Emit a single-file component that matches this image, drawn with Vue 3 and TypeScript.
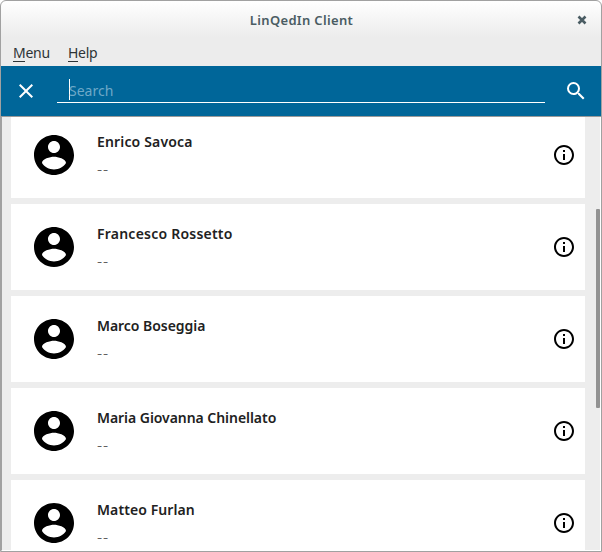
<script setup lang="ts">
import { ref } from 'vue'

interface Contact {
  name: string
  detail: string
  tracking: number
}

const query = ref('')
const contacts: Contact[] = [
  { name: 'Enrico Savoca', detail: '--', tracking: 0.16 },
  { name: 'Francesco Rossetto', detail: '--', tracking: 0.23 },
  { name: 'Marco Boseggia', detail: '--', tracking: -0.04 },
  { name: 'Maria Giovanna Chinellato', detail: '--', tracking: -0.05 },
  { name: 'Matteo Furlan', detail: '--', tracking: 0.09 },
]
</script>

<template>
  <div class="window">
    <header class="titlebar">
      <span class="side"></span>
      <h1 class="title">LinQedIn Client</h1>
      <button class="side close" aria-label="Close">
        <svg width="10" height="10" viewBox="0 0 10 10"><path d="M1.500 1.500 8.500 8.500M8.500 1.500 1.500 8.500" stroke="#4a5c63" stroke-width="2.600" /></svg>
      </button>
    </header>
    <nav class="menubar">
      <span class="menu"><span class="key">M</span>enu</span>
      <span class="menu"><span class="key">H</span>elp</span>
    </nav>
    <div class="search">
      <svg class="clear" width="24" height="24" viewBox="0 0 24 24"><path fill="#fff" d="M19 6.41 17.59 5 12 10.59 6.41 5 5 6.41 10.59 12 5 17.59 6.41 19 12 13.41 17.59 19 19 17.59 13.41 12z" /></svg>
      <div class="field">
        <i class="caret"></i>
        <span v-if="!query" class="hint">Search</span>
      </div>
      <svg class="find" width="24" height="24" viewBox="0 0 24 24"><path fill="#fff" d="M15.5 14h-.79l-.28-.27A6.47 6.47 0 0 0 16 9.5 6.5 6.5 0 1 0 9.5 16c1.61 0 3.09-.59 4.23-1.57l.27.28v.79l5 4.99L20.49 19l-4.99-5zm-6 0C7.01 14 5 11.99 5 9.5S7.01 5 9.5 5 14 7.01 14 9.5 11.99 14 9.5 14z" /></svg>
    </div>
    <main class="body">
      <ul class="list">
        <li v-for="c in contacts" :key="c.name" class="card">
          <svg class="avatar" width="48" height="48" viewBox="0 0 24 24"><path d="M12 2C6.480 2 2 6.480 2 12s4.480 10 10 10 10-4.480 10-10S17.520 2 12 2zm0 3c1.660 0 3 1.340 3 3s-1.340 3-3 3-3-1.340-3-3 1.340-3 3-3zm0 14.200c-2.500 0-4.710-1.280-6-3.220.03-1.990 4-3.080 6-3.080 1.990 0 5.970 1.090 6 3.080-1.290 1.940-3.500 3.220-6 3.220z" /></svg>
          <div class="text">
            <span class="name" :style="{ letterSpacing: c.tracking + 'px' }">{{ c.name }}</span>
            <span class="detail">{{ c.detail }}</span>
          </div>
          <svg class="info" width="24" height="24" viewBox="0 0 24 24"><path d="M11 17h2v-6h-2v6zm1-15C6.480 2 2 6.480 2 12s4.480 10 10 10 10-4.480 10-10S17.520 2 12 2zm0 18c-4.410 0-8-3.590-8-8s3.590-8 8-8 8 3.590 8 8-3.590 8-8 8zM11 9h2V7h-2v2z" /></svg>
        </li>
      </ul>
      <div class="track"><div class="thumb"></div></div>
    </main>
  </div>
</template>

<style>
body {
  background: #fff;
}
</style>

<style scoped>
.window {
  box-sizing: border-box;
  width: 602px;
  height: 552px;
  border: 1px solid #a1a1a1;
  border-radius: 6px 6px 0 0;
  overflow: hidden;
  display: flex;
  flex-direction: column;
  font-family: "Noto Sans", "Open Sans", sans-serif;
  background: linear-gradient(#fff, #ececec 36px);
}
.titlebar {
  height: 38px;
  display: flex;
  align-items: center;
}
.side {
  width: 40px;
}
.close {
  height: 38px;
  padding: 0 0 0 2px;
  border: 0;
  background: none;
  display: flex;
  align-items: center;
  justify-content: center;
}
.title {
  flex: 1;
  margin: 0;
  padding-left: 1px;
  text-align: center;
  font-size: 13px;
  font-weight: 600;
  line-height: 20px;
  letter-spacing: 0.33px;
  color: #4a5c63;
}
.menubar {
  height: 27px;
  padding-left: 12px;
  display: flex;
  gap: 18px;
  font-size: 14px;
  letter-spacing: -0.25px;
  line-height: 27px;
  color: #2e3436;
}
.key {
  display: inline-block;
  height: 23px;
  border-bottom: 1px solid #2e3436;
  box-sizing: border-box;
  line-height: 27px;
}
.search {
  height: 50px;
  flex: none;
  display: flex;
  align-items: center;
  background: #006699;
  border-bottom: 1px solid #999;
}
.clear {
  margin-left: 13px;
}
.field {
  width: 488px;
  height: 24px;
  margin: 0 19px;
  box-sizing: border-box;
  border-bottom: 1px solid #fff;
  display: flex;
  padding-left: 12px;
}
.caret {
  width: 1px;
  height: 21px;
  background: #fff;
}
.hint {
  margin-left: -1px;
  font-size: 14px;
  line-height: 24px;
  color: #6ea9c8;
}
.body {
  flex: 1;
  min-height: 0;
  display: flex;
  background: #ededed;
  border-left: 1px solid #a1a1a1;
  border-right: 1px solid #fff;
  border-bottom: 1px solid #fff;
}
.list {
  width: 574px;
  height: 433px;
  margin: 0 0 0 9px;
  padding: 0;
  overflow: hidden;
  list-style: none;
  display: flex;
  flex-direction: column;
  gap: 6px;
}
.card {
  flex: none;
  height: 86px;
  box-sizing: border-box;
  padding: 0 9px 0 19px;
  background: #fff;
  display: flex;
  align-items: flex-start;
}
.card:first-child {
  margin-top: -5px;
}
.avatar {
  margin-top: 19px;
}
.text {
  flex: 1;
  margin: 19px 0 0 19px;
  display: flex;
  flex-direction: column;
}
.name {
  font-size: 14px;
  font-weight: 600;
  line-height: 22px;
  color: #212121;
  white-space: nowrap;
}
.detail {
  margin-top: 6px;
  font-size: 16px;
  font-weight: 300;
  letter-spacing: 0.9px;
  line-height: 20px;
  color: #555;
}
.info {
  margin-top: 31px;
}
.track {
  flex: 1;
  padding: 92px 0 0 11px;
}
.thumb {
  width: 4px;
  height: 199px;
  border-radius: 1px;
  background: #929292;
}
</style>
